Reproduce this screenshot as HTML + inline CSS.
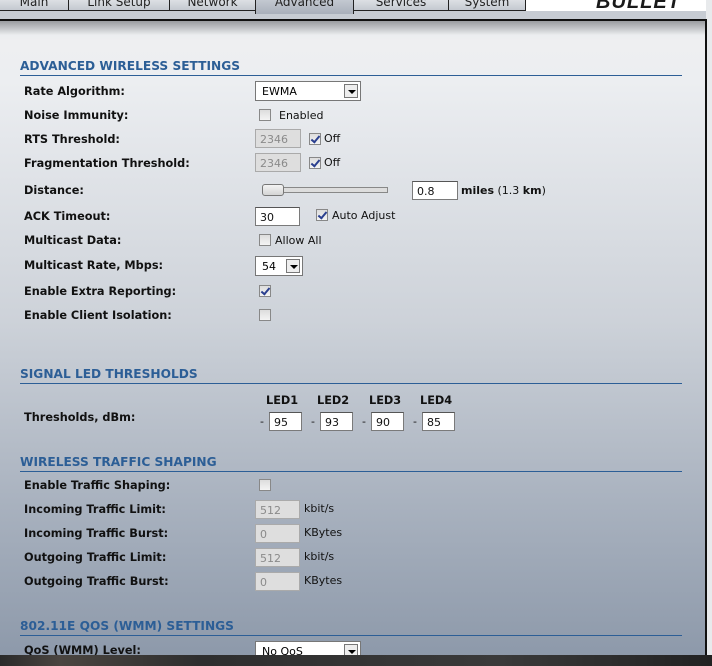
<!DOCTYPE html>
<html><head><meta charset="utf-8"><style>
*{margin:0;padding:0;box-sizing:border-box}
body{width:712px;height:666px;overflow:hidden;position:relative;background:#fff;font-family:"DejaVu Sans","Liberation Sans",sans-serif}
.abs{position:absolute}
#panel{left:0;top:19px;width:707px;height:636px;background:linear-gradient(to bottom,#e6e8eb 0px,#eeeff1 20px,#eceef1 60px,#cdd2d9 300px,#a9b2bf 480px,#8d99aa 636px);border-top:2px solid #111;border-right:2px solid #111}
#shadow{left:0;top:21px;width:705px;height:14px;background:linear-gradient(#9a9ca0,rgba(230,232,235,0))}
.lbl{position:absolute;left:24px;font-weight:bold;font-size:11.3px;color:#111;line-height:14px;margin-top:1px}
.h{position:absolute;left:20px;font-weight:bold;font-size:12.2px;color:#2c5e96;line-height:14px;margin-top:1px}
.ln{position:absolute;left:20px;width:662px;height:1px;background:#2c5e96}
.in{position:absolute;height:19px;background:#fff;border:1px solid #7a7a7a;border-top-color:#555;font-size:11px;padding-left:4px;line-height:19px;color:#111}
.dis{background:#dedede;color:#8a8a8a;border-color:#aaa}
.cb{position:absolute;width:12px;height:12px;border:1px solid #888;background:linear-gradient(#ddd,#f4f4f4)}
.cb.on::after{content:"";position:absolute;left:3px;top:0px;width:3px;height:7px;border:solid #2a3f8f;border-width:0 2px 2px 0;transform:rotate(40deg)}
.t{position:absolute;font-size:11px;color:#111;line-height:14px;margin-top:1px}
.sel{position:absolute;height:20px;background:#fff;border:1px solid #777;font-size:11px;line-height:20px;padding-left:6px}
.sel b{position:absolute;right:2px;top:2px;width:14px;height:14px;border:1px solid #777;background:#eee}
.sel b::after{content:"";position:absolute;left:3px;top:5px;border:4px solid transparent;border-top:4px solid #000;border-bottom:0}
.tab{position:absolute;top:-2px;height:13px;border:1px solid #222;background:linear-gradient(#dfe2e6,#c4c9d0);font-size:12px;color:#222;text-align:center;line-height:6px;overflow:hidden}
</style></head><body>
<div class="abs" style="left:0;top:0;width:712px;height:19px;background:#c7ccd3"></div>
<div class="tab" style="left:-1px;width:70px">Main</div>
<div class="tab" style="left:68px;width:102px">Link Setup</div>
<div class="tab" style="left:169px;width:87px">Network</div>
<div class="tab" style="left:255px;width:99px;height:16px;background:linear-gradient(#c5cad2,#a9b0bb);border-bottom:none">Advanced</div>
<div class="tab" style="left:353px;width:96px">Services</div>
<div class="tab" style="left:448px;width:78px">System</div>
<div class="abs" style="left:526px;top:0;width:180px;height:11px;background:#fff"></div>
<div class="abs" style="left:596px;top:-9px;font:italic 900 20px 'Liberation Sans',sans-serif;color:#1a1a1a;letter-spacing:1px">BULLET</div>
<div class="abs" style="left:706px;top:0;width:6px;height:666px;background:#e8eaec"></div>
<div id="panel" class="abs"></div>
<div id="shadow" class="abs"></div>

<div class="h" style="top:58px">ADVANCED WIRELESS SETTINGS</div><div class="ln" style="top:75px"></div>
<div class="lbl" style="top:84px">Rate Algorithm:</div>
<div class="sel" style="left:255px;top:81px;width:106px">EWMA<b></b></div>
<div class="lbl" style="top:108px">Noise Immunity:</div>
<div class="cb" style="left:259px;top:109px"></div><div class="t" style="left:279px;top:108px">Enabled</div>
<div class="lbl" style="top:132px">RTS Threshold:</div>
<div class="in dis" style="left:255px;top:129px;width:46px">2346</div>
<div class="cb on" style="left:309px;top:133px"></div><div class="t" style="left:324px;top:131px">Off</div>
<div class="lbl" style="top:156px">Fragmentation Threshold:</div>
<div class="in dis" style="left:255px;top:153px;width:46px">2346</div>
<div class="cb on" style="left:309px;top:157px"></div><div class="t" style="left:324px;top:155px">Off</div>
<div class="lbl" style="top:183px">Distance:</div>
<div class="abs" style="left:280px;top:187px;width:108px;height:6px;border:1px solid #888;background:#ddd"></div>
<div class="abs" style="left:262px;top:184px;width:22px;height:12px;border:1px solid #777;border-radius:3px;background:linear-gradient(#f4f4f4,#d4d4d4)"></div>
<div class="in" style="left:412px;top:181px;width:46px">0.8</div>
<div class="t" style="left:461px;top:183px"><b>miles</b> (1.3 <b>km</b>)</div>
<div class="lbl" style="top:209px">ACK Timeout:</div>
<div class="in" style="left:255px;top:207px;width:45px">30</div>
<div class="cb on" style="left:316px;top:209px"></div><div class="t" style="left:332px;top:208px">Auto Adjust</div>
<div class="lbl" style="top:233px">Multicast Data:</div>
<div class="cb" style="left:259px;top:234px"></div><div class="t" style="left:275px;top:233px">Allow All</div>
<div class="lbl" style="top:258px">Multicast Rate, Mbps:</div>
<div class="sel" style="left:255px;top:256px;width:48px">54<b></b></div>
<div class="lbl" style="top:284px">Enable Extra Reporting:</div>
<div class="cb on" style="left:259px;top:285px"></div>
<div class="lbl" style="top:308px">Enable Client Isolation:</div>
<div class="cb" style="left:259px;top:309px"></div>

<div class="h" style="top:366px">SIGNAL LED THRESHOLDS</div><div class="ln" style="top:383px"></div>
<div class="lbl" style="top:410px">Thresholds, dBm:</div>
<div class="lbl" style="left:266px;top:393px">LED1</div><div class="lbl" style="left:317px;top:393px">LED2</div><div class="lbl" style="left:369px;top:393px">LED3</div><div class="lbl" style="left:420px;top:393px">LED4</div>
<div class="t" style="left:260px;top:414px">-</div><div class="in" style="left:269px;top:412px;width:33px">95</div>
<div class="t" style="left:311px;top:414px">-</div><div class="in" style="left:320px;top:412px;width:33px">93</div>
<div class="t" style="left:362px;top:414px">-</div><div class="in" style="left:371px;top:412px;width:33px">90</div>
<div class="t" style="left:413px;top:414px">-</div><div class="in" style="left:422px;top:412px;width:33px">85</div>

<div class="h" style="top:454px">WIRELESS TRAFFIC SHAPING</div><div class="ln" style="top:471px"></div>
<div class="lbl" style="top:478px">Enable Traffic Shaping:</div>
<div class="cb" style="left:259px;top:479px"></div>
<div class="lbl" style="top:502px">Incoming Traffic Limit:</div>
<div class="in dis" style="left:255px;top:500px;width:45px">512</div><div class="t" style="left:304px;top:501px">kbit/s</div>
<div class="lbl" style="top:526px">Incoming Traffic Burst:</div>
<div class="in dis" style="left:255px;top:524px;width:45px">0</div><div class="t" style="left:304px;top:525px">KBytes</div>
<div class="lbl" style="top:550px">Outgoing Traffic Limit:</div>
<div class="in dis" style="left:255px;top:548px;width:45px">512</div><div class="t" style="left:304px;top:549px">kbit/s</div>
<div class="lbl" style="top:574px">Outgoing Traffic Burst:</div>
<div class="in dis" style="left:255px;top:572px;width:45px">0</div><div class="t" style="left:304px;top:573px">KBytes</div>

<div class="h" style="top:618px">802.11E QOS (WMM) SETTINGS</div><div class="ln" style="top:635px"></div>
<div class="lbl" style="top:643px">QoS (WMM) Level:</div>
<div class="sel" style="left:255px;top:641px;width:106px">No QoS<b></b></div>
<div class="abs" style="left:0;top:655px;width:712px;height:11px;background:linear-gradient(90deg,#2a2a2a,#4a4540 60px,#2e2e2e 200px,#3a3a3a 500px,#222)"></div>
</body></html>
